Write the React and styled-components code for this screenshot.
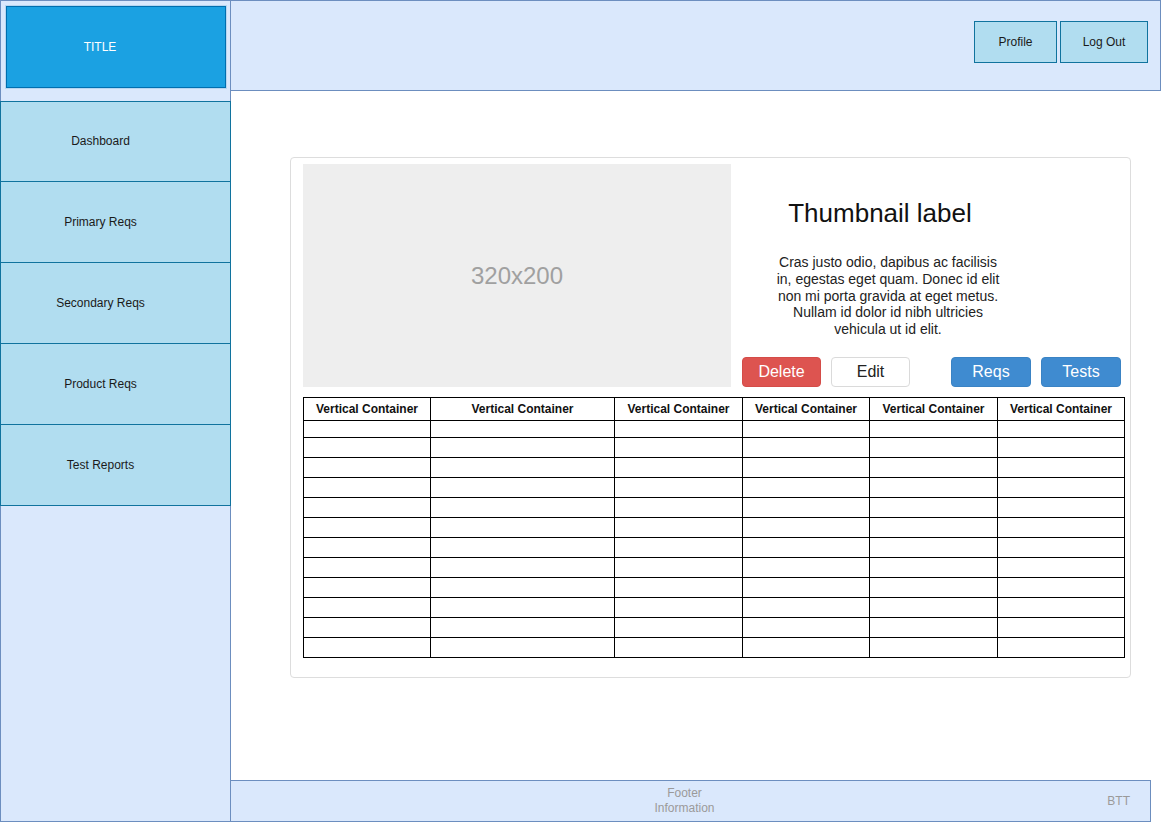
import React from "react";
import styled, { createGlobalStyle } from "styled-components";

const Global = createGlobalStyle`
  html, body { margin: 0; padding: 0; background: #fff; }
  body { font-family: "Liberation Sans", Arial, sans-serif; }
  * { box-sizing: border-box; }
`;

const Page = styled.div`
  display: flex;
  width: 1161px;
  height: 822px;
  overflow: hidden;
`;

const Sidebar = styled.aside`
  width: 231px;
  flex: none;
  display: flex;
  flex-direction: column;
  background: #dae8fc;
  border: 1px solid #6c8ebf;
  height: 822px;
`;

const TitleWrap = styled.div`
  padding: 5px 4px 0 5px;
  height: 100px;
`;

const TitleBox = styled.div`
  height: 82px;
  background: #1ba1e2;
  border: 1px solid #006eaf;
  box-shadow: 0 0 0 1px #b7d6f0;
  display: flex;
  align-items: center;
  justify-content: center;
  padding-right: 32px;
  color: #fff;
  font-size: 12px;
`;

const Nav = styled.nav`
  display: flex;
  flex-direction: column;
  margin: 0 -1px;
`;

const NavItem = styled.div`
  height: 82px;
  margin-top: -1px;
  background: #b1ddf0;
  border: 1px solid #10739e;
  display: flex;
  align-items: center;
  justify-content: center;
  padding: 0 30px 1px 0;
  font-size: 12px;
  color: #1a1a1a;
  &:first-child { margin-top: 0; height: 81px; }
`;

const Main = styled.div`
  flex: 1;
  display: flex;
  flex-direction: column;
  margin-left: -1px;
  min-width: 0;
`;

const Header = styled.header`
  height: 91px;
  flex: none;
  background: #dae8fc;
  border: 1px solid #6c8ebf;
  display: flex;
  justify-content: flex-end;
  align-items: flex-start;
  padding: 20px 12px 0 0;
  gap: 3px;
`;

const HeadButton = styled.div`
  width: ${p => p.$w}px;
  height: 42px;
  background: #b1ddf0;
  border: 1px solid #10739e;
  display: flex;
  align-items: center;
  justify-content: center;
  font-size: 12px;
  color: #1a1a1a;
`;

const Content = styled.main`
  flex: 1;
  padding: 66px 30px 0 60px;
`;

const Card = styled.section`
  width: 841px;
  height: 521px;
  border: 1px solid #ddd;
  border-radius: 4px;
  padding: 6px 0 0 12px;
  display: flex;
  flex-direction: column;
  gap: 10px;
`;

const Top = styled.div`
  display: flex;
  height: 223px;
`;

const Placeholder = styled.div`
  width: 428px;
  height: 223px;
  flex: none;
  background: #eeeeee;
  color: #a0a0a0;
  font-size: 24px;
  display: flex;
  align-items: center;
  justify-content: center;
`;

const Info = styled.div`
  flex: 1;
  display: flex;
  flex-direction: column;
`;

const Caption = styled.div`
  width: 298px;
  text-align: center;
`;

const Label = styled.h3`
  margin: 33px 0 0;
  font-size: 26px;
  font-weight: normal;
  line-height: 32px;
  color: #111;
`;

const Text = styled.p`
  margin: 25px 0 0 42px;
  width: 230px;
  font-size: 14px;
  line-height: 16.75px;
  color: #222;
`;

const Buttons = styled.div`
  margin-top: auto;
  display: flex;
  padding-left: 11px;
  gap: 10px;
`;

const Btn = styled.div`
  width: ${p => p.$w || 79}px;
  height: 30px;
  margin-left: ${p => p.$ml || 0}px;
  border-radius: 4px;
  display: flex;
  align-items: center;
  justify-content: center;
  font-size: 16px;
  color: ${p => (p.$kind === "default" ? "#222" : "#fff")};
  background: ${p =>
    p.$kind === "danger" ? "#dd5450" : p.$kind === "primary" ? "#3f8bd0" : "#fff"};
  border: 1px solid
    ${p =>
      p.$kind === "danger" ? "#d44c48" : p.$kind === "primary" ? "#3a83c4" : "#dadada"};
`;

const Table = styled.table`
  border-collapse: collapse;
  table-layout: fixed;
  width: 822px;
  font-size: 12px;
`;

const Th = styled.th`
  border: 1px solid #000;
  height: 23px;
  padding: 0;
  font-weight: bold;
  color: #111;
  text-align: center;
`;

const Td = styled.td`
  border: 1px solid #000;
  height: ${p => p.$h}px;
  padding: 0;
`;

const Footer = styled.footer`
  height: 42px;
  flex: none;
  margin-right: 10px;
  background: #dae8fc;
  border: 1px solid #6c8ebf;
  display: grid;
  grid-template-columns: 1fr auto 1fr;
  align-items: center;
  color: #9a9a9a;
  font-size: 12px;
`;

const FooterText = styled.div`
  grid-column: 2;
  margin-right: 12px;
  text-align: center;
  line-height: 15px;
`;

const Btt = styled.div`
  justify-self: end;
  padding-right: 20px;
`;

const cols = [127, 184, 128, 127, 128, 127];

export default function App() {
  const rows = Array.from({ length: 12 }, (_, i) => (i === 0 ? 17 : 20));
  return (
    <Page>
      <Global />
      <Sidebar>
        <TitleWrap>
          <TitleBox>TITLE</TitleBox>
        </TitleWrap>
        <Nav>
          {["Dashboard", "Primary Reqs", "Secondary Reqs", "Product Reqs", "Test Reports"].map(n => (
            <NavItem key={n}>{n}</NavItem>
          ))}
        </Nav>
      </Sidebar>
      <Main>
        <Header>
          <HeadButton $w={83}>Profile</HeadButton>
          <HeadButton $w={88}>Log Out</HeadButton>
        </Header>
        <Content>
          <Card>
            <Top>
              <Placeholder>320x200</Placeholder>
              <Info>
                <Caption>
                  <Label>Thumbnail label</Label>
                  <Text>
                    Cras justo odio, dapibus ac facilisis in, egestas eget quam. Donec id elit non mi
                    porta gravida at eget metus. Nullam id dolor id nibh ultricies vehicula ut id elit.
                  </Text>
                </Caption>
                <Buttons>
                  <Btn $kind="danger">Delete</Btn>
                  <Btn $kind="default">Edit</Btn>
                  <Btn $kind="primary" $w={80} $ml={31}>Reqs</Btn>
                  <Btn $kind="primary" $w={80}>Tests</Btn>
                </Buttons>
              </Info>
            </Top>
            <Table>
              <colgroup>
                {cols.map((w, i) => (
                  <col key={i} style={{ width: w }} />
                ))}
              </colgroup>
              <thead>
                <tr>
                  {cols.map((_, i) => (
                    <Th key={i}>Vertical Container</Th>
                  ))}
                </tr>
              </thead>
              <tbody>
                {rows.map((h, r) => (
                  <tr key={r}>
                    {cols.map((_, c) => (
                      <Td key={c} $h={h} />
                    ))}
                  </tr>
                ))}
              </tbody>
            </Table>
          </Card>
        </Content>
        <Footer>
          <FooterText>
            Footer
            <br />
            Information
          </FooterText>
          <Btt>BTT</Btt>
        </Footer>
      </Main>
    </Page>
  );
}
